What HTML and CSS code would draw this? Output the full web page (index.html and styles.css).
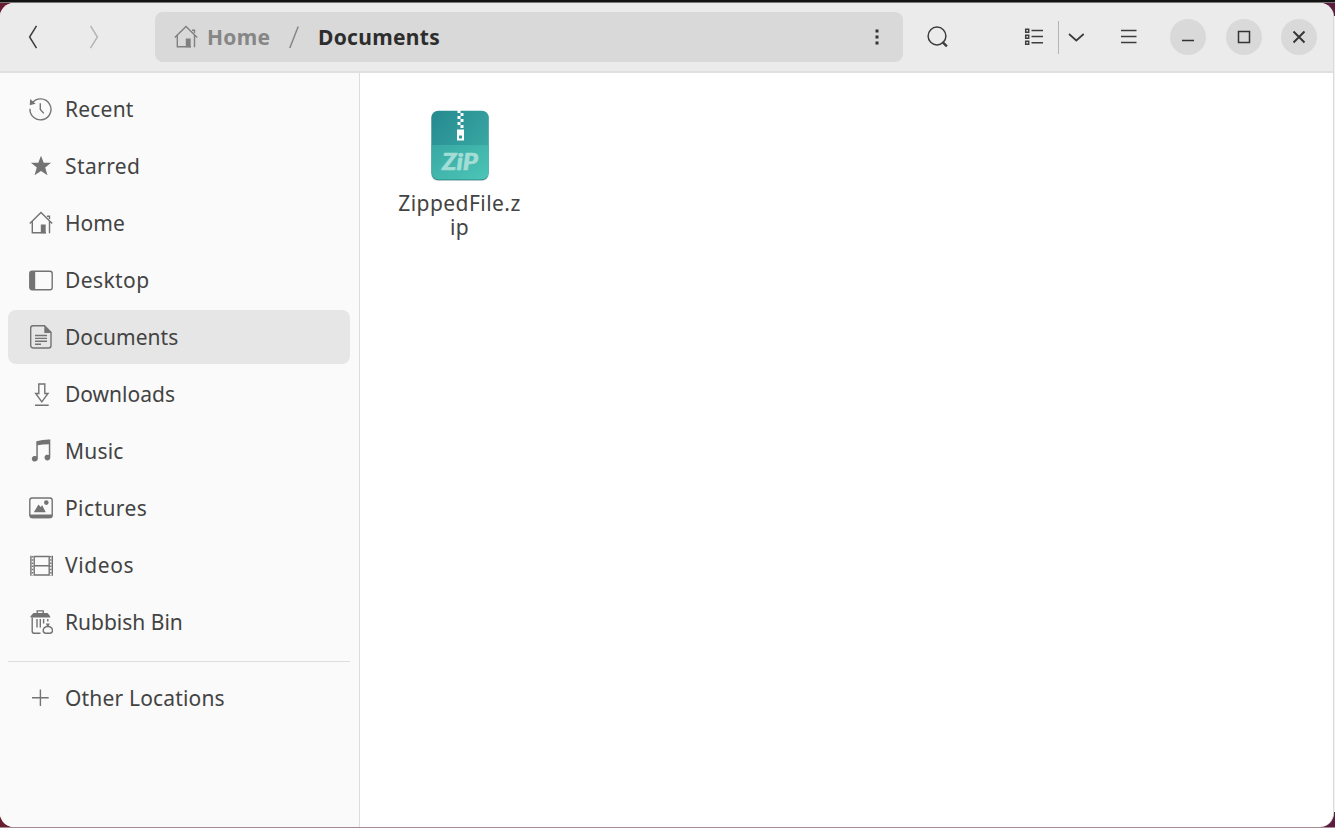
FILE: index.html
```html
<!DOCTYPE html>
<html lang="en-GB">
<head>
<meta charset="utf-8">
<title>Documents</title>
<link rel="stylesheet" href="styles.css">
</head>
<body>
<svg class="defs" width="0" height="0">
  <symbol id="home" viewBox="0 0 24 24">
    <path d="M.8 12.500 12 1.500 23.200 12.500M3.300 10.500V21.700H17M20.500 22.300V9.800M18 5.200H20.500V8" fill="none" stroke="currentColor" stroke-width="1.400"/>
    <path d="M11.800 13.500H16.700V22.300H11.800z" fill="currentColor"/>
  </symbol>
</svg>
<div class="window">
  <header class="header">
    <button class="btn back"><svg width="24" height="24" viewBox="0 0 24 24"><path d="M15.500.8 8.600 12l6.900 11.200"/></svg></button>
    <button class="btn forward"><svg width="24" height="24" viewBox="0 0 24 24"><path d="M8.500.8 15.400 12 8.500 23.200"/></svg></button>
    <nav class="path">
      <svg class="path-home" width="24" height="24"><use href="#home"/></svg>
      <span class="crumb parent">Home</span>
      <svg class="slash" width="10" height="24" viewBox="0 0 10 24"><path d="M.8 23 9.200 1.500"/></svg>
      <span class="crumb current">Documents</span>
      <svg class="dots" width="4" height="18" viewBox="0 0 4 18"><path d="M.5 1.500h3v3h-3zM.5 7.500h3v3h-3zM.5 13.500h3v3h-3z"/></svg>
    </nav>
    <button class="btn search"><svg width="24" height="24" viewBox="0 0 24 24"><circle cx="11" cy="11" r="8.900"/><path d="m16.300 16.800 4.600 4.600" stroke-width="2.400"/></svg></button>
    <button class="btn list"><svg width="20" height="20" viewBox="0 0 20 20"><path d="M1.700 2.200h3v3h-3zM1.700 8.200h3v3h-3zM1.700 14.200h3v3h-3z"/><path d="M7.500 3.600H19M7.500 9.600H19M7.500 15.700H19"/></svg></button>
    <span class="divider"></span>
    <button class="btn drop"><svg width="18" height="12" viewBox="0 0 18 12"><path d="m1 3 7.300 6.500L15.700 3" stroke-width="1.700"/></svg></button>
    <button class="btn menu"><svg width="18" height="18" viewBox="0 0 18 18"><path d="M1 2.500h15.500M1 8.500h15.500M1 14.600h15.500"/></svg></button>
    <div class="controls">
      <button class="round"><svg width="16" height="16" viewBox="0 0 16 16"><path d="M2 11.600h12"/></svg></button>
      <button class="round"><svg width="16" height="16" viewBox="0 0 16 16"><path d="M2.500 2.500h11v11h-11z"/></svg></button>
      <button class="round"><svg width="16" height="16" viewBox="0 0 16 16"><path d="m2.500 2.500 11 11m0-11-11 11" stroke-width="1.900"/></svg></button>
    </div>
  </header>
  <div class="body">
    <aside class="sidebar">
      <div class="row"><svg class="icon" viewBox="0 0 24 24"><path class="ln" d="M3.200 5.900A10.500 10.500 0 1 1 1 11.800M11.300 6.200v6.300l3.500 3.900"/><path class="fl" d="M1.200 2 6.500 6.800.7 8.200z"/></svg><span class="l1">Recent</span></div>
      <div class="row"><svg class="icon" viewBox="0 0 24 24"><path class="fl" d="m12 1.800 2.700 7h7.400l-5.900 4.600 2.300 7.900L12 16.900l-6.500 4.400 2.300-7.900-5.900-4.600h7.400z"/></svg><span class="l2">Starred</span></div>
      <div class="row"><svg class="icon"><use href="#home"/></svg><span class="l3">Home</span></div>
      <div class="row"><svg class="icon" viewBox="0 0 24 24"><rect class="ln" x=".8" y="3.300" width="22.400" height="18.400" rx="2.200"/><path class="fl" d="M3 3h3.200v19H3a2.200 2.200 0 0 1-2.200-2.200V5.200A2.200 2.200 0 0 1 3 3z"/></svg><span class="l4">Desktop</span></div>
      <div class="row active"><svg class="icon" viewBox="0 0 24 24"><path class="ln" d="M4 .8h11.500l6.500 6.500v13.200a2.500 2.500 0 0 1-2.500 2.500H4.200a2.500 2.500 0 0 1-2.500-2.500V3.200A2.400 2.400 0 0 1 4 .8zM6 10.500h12M6 13.400h12M6 16.300h12M6 19.200h6"/><path class="fl" d="M15.300.8 22.500 8h-7.200z"/></svg><span class="l5">Documents</span></div>
      <div class="row"><svg class="icon" viewBox="0 0 24 24"><path class="ln" d="M9.800 2h6v9.500h3.200L12.800 19.800 6.700 11.500h3.100zM6 23.300h13.700"/></svg><span class="l6">Downloads</span></div>
      <div class="row"><svg class="icon" viewBox="0 0 24 24"><path class="fl" d="M7.300 2.200Q14 .3 21.300.5V18.500A2.900 2.900 0 1 1 19.800 16V5.200Q14 5.200 8.800 6.200V19.700A3 2.800 0 1 1 7.300 17.300z"/></svg><span class="l7">Music</span></div>
      <div class="row"><svg class="icon" viewBox="0 0 24 24"><rect class="ln" x=".8" y="2" width="22.400" height="19.500" rx="2.200"/><path class="fl" d="M.8 18.500h22.400v1.500a2.200 2.200 0 0 1-2.200 2.200H3A2.200 2.200 0 0 1 .8 20zM4.800 16.300 9.500 8.500l2.200 2.600 1.500-1.800 3.600 7z"/><circle class="fl" cx="17.300" cy="6.600" r="2.300"/></svg><span class="l8">Pictures</span></div>
      <div class="row"><svg class="icon" viewBox="0 0 24 24"><path class="ln" d="M5.200 3.500h15v18.500h-15zM5.200 12.700h15M1.900 2.700v20M23.300 2.700v20"/><path class="ln" stroke-dasharray="1.500 1.700" stroke-width="2.600" d="M3.500 3v19.700M21.800 3v19.700"/></svg><span class="l9">Videos</span></div>
      <div class="row"><svg class="icon" viewBox="0 0 24 24"><path class="ln" d="M8.200 3.500V.9h6v2.600M3.200 7.500v13.700q0 2.100 2.200 2.100H11.500M8 9v8.500M11.300 9v8.500M14.600 9v4.500M18.800 9v2.500"/><path class="fl" d="M4.500 3h14l2.700 3.200v1.200H1.500V6.200zM16.800 13.600h4l-1.300 2.600h-1.400z"/><path class="ln" d="M18.800 16.300c-2.700.5-4.600 2.200-4.600 4.300 0 1.800 1.200 2.700 2.700 2.700h3.900c1.500 0 2.700-.9 2.700-2.700 0-2.100-2-3.800-4.700-4.300z"/></svg><span class="l10">Rubbish Bin</span></div>
      <div class="sep"></div>
      <div class="row"><svg class="icon" viewBox="0 0 24 24"><path class="ln" d="M3 11.700h16.700M11.400 3.400v16.700"/></svg><span class="l11">Other Locations</span></div>
    </aside>
    <main class="files">
      <div class="file">
        <svg class="zip" width="66" height="78" viewBox="0 0 66 78">
          <defs>
            <linearGradient id="top" x1="0" y1="0" x2="1" y2="1"><stop offset="0" stop-color="#25898f"/><stop offset="1" stop-color="#3fb1aa"/></linearGradient>
            <linearGradient id="low" x1="0" y1="0" x2="1" y2="1"><stop offset="0" stop-color="#38a8a3"/><stop offset="1" stop-color="#4cc5b7"/></linearGradient>
          </defs>
          <rect x="4" y="4.500" width="58" height="69.500" rx="7" fill="#777" opacity=".25"/>
          <rect x="4.500" y="4.500" width="57" height="68.700" rx="6.500" fill="#2f8f8b"/>
          <rect x="4.700" y="3.700" width="56.800" height="68.500" rx="6.500" fill="url(#top)"/>
          <path d="M4.700 38h56.800v27.700a6.500 6.500 0 0 1-6.500 6.500H11.200a6.500 6.500 0 0 1-6.500-6.500z" fill="url(#low)"/>
          <path d="M30.500 3h3v3h-3zM33.500 6h3v3h-3zM30.500 9h3v3h-3zM33.500 12h3v3h-3zM30.500 15h3v3h-3zM33.500 18h3v3h-3zM30 22.500h7v11h-7zM32 28.500v3h3v-3z" fill="#fff" fill-rule="evenodd"/>
          <text class="zip-mark" x="15" y="63" textLength="36" lengthAdjust="spacingAndGlyphs">ZiP</text>
        </svg>
        <div class="name">ZippedFile.z<br>ip</div>
      </div>
    </main>
  </div>
</div>
</body>
</html>
```
FILE: styles.css
```css
* { box-sizing: border-box; }
body {
  margin: 0;
  height: 828px;
  overflow: hidden;
  padding: 3px 1px 1px 0;
  background: linear-gradient(#141313 0 2px, #777 2px 3px, transparent 3px),
    linear-gradient(transparent 827px, #a58a94 827px),
    linear-gradient(transparent 16px, #f4f0f2 16px 812px, transparent 812px) right / 1px 100% no-repeat,
    linear-gradient(90deg, #6a1c30, #5c1c3f);
  font-family: "Noto Sans", sans-serif;
  color: #434343;
}
.defs { display: block; height: 0; }
.window {
  height: 824px;
  border-radius: 14px;
  overflow: hidden;
  background: #fff;
  display: flex;
  flex-direction: column;
  border-right: 1px solid #dadada;
}
.header {
  height: 70px;
  flex: none;
  display: flex;
  align-items: center;
  background: #ebebeb;
  border-bottom: 2px solid #e0e0e0;
}
button { border: 0; padding: 0; background: none; display: flex; align-items: center; justify-content: center; flex: none; color: #3d3d3d; }
.header svg { fill: none; stroke: currentColor; stroke-width: 1.5; flex: none; }
.back { width: 65px; }
.forward { width: 58px; color: #b5b5b5; }
.path {
  width: 748px;
  height: 50px;
  margin-left: 32px;
  padding: 0 24px 0 20px;
  border-radius: 8px;
  background: #d9d9d9;
  display: flex;
  align-items: center;
}
.path .path-home { stroke: none; color: #808080; margin-left: -1px; }
.crumb { font-weight: 700; font-size: 21px; line-height: 30px; padding-bottom: 1px; white-space: nowrap; letter-spacing: .3px; }
.parent { width: 63px; margin-left: 9px; color: #868686; }
.slash { margin-left: 19px; color: #868686; }
.current { margin-left: 19px; color: #2d2d2d; }
.path .dots { margin-left: auto; fill: #333; stroke: none; }
.search { width: 69px; }
.list { width: 48px; margin-left: 38px; }
.divider { width: 1px; height: 33px; background: #b4b4b4; }
.drop { width: 35px; }
.menu { width: 50px; margin-left: 10px; }
.controls { display: flex; gap: 19.5px; margin-left: 16px; }
.round { width: 36px; height: 36px; border-radius: 50%; background: #d9d9d9; color: #333; }
.body { flex: 1; display: flex; }
.sidebar {
  width: 360px;
  padding: 9px 9px 0 8px;
  background: #fafafa;
  border-right: 1px solid #dcdcdc;
}
.row {
  height: 54px;
  margin-bottom: 3px;
  padding-left: 21px;
  display: flex;
  align-items: center;
  gap: 12px;
  border-radius: 8px;
  font-size: 21px;
  white-space: nowrap;
}
.active { background: #e6e6e6; }
.icon { width: 24px; height: 24px; flex: none; color: #737373; }
.ln { fill: none; stroke: currentColor; stroke-width: 1.4; }
.fl { fill: currentColor; }
.l1, .l7 { letter-spacing: .2px; }
.l2, .l4, .l8 { letter-spacing: .4px; }
.l9 { letter-spacing: .6px; }
.l11 { letter-spacing: .17px; }
.sep { height: 1px; margin: 12px 0 9px; background: #dcdcdc; }
.files { flex: 1; padding: 34px 0 0 26px; }
.file { width: 147px; display: flex; flex-direction: column; align-items: center; }
.zip { display: block; }
.zip-mark { font: italic 900 23px "Lato", "Noto Sans", sans-serif; fill: #a2ddd6; stroke: #a2ddd6; stroke-width: .6; }
.name { margin-top: 6px; text-align: center; font-size: 21px; line-height: 24px; letter-spacing: .45px; }
```
